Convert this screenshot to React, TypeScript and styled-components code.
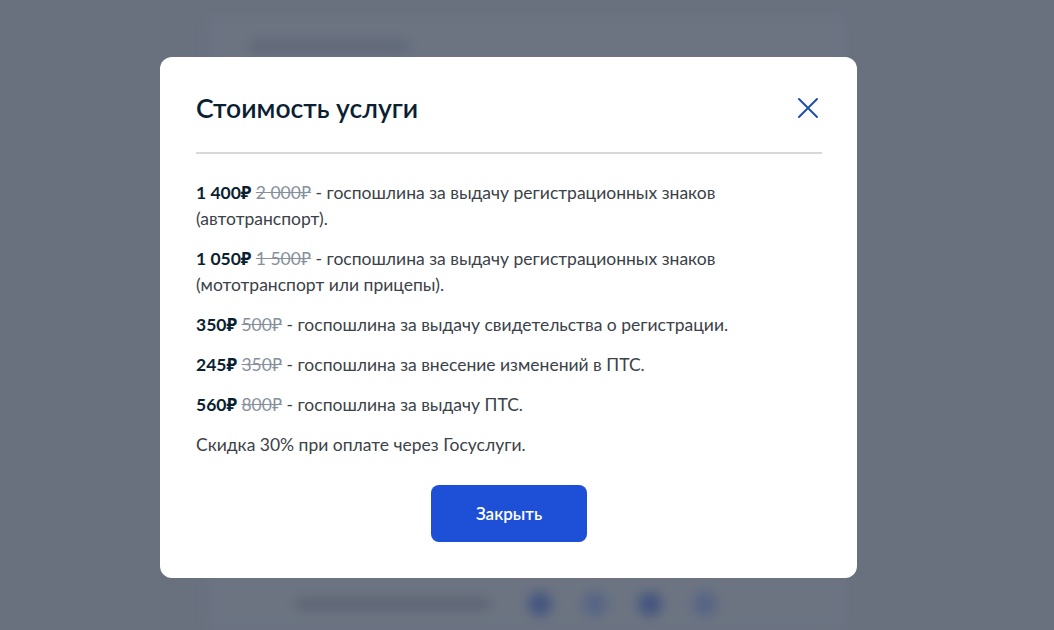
import React from "react";
import styled, { createGlobalStyle } from "styled-components";

const Global = createGlobalStyle`
  html, body { margin: 0; padding: 0; }
  body {
    width: 1054px;
    height: 630px;
    overflow: hidden;
    background: #69717f;
    font-family: Lato, "Noto Sans", "DejaVu Sans", sans-serif;
  }
`;

const BackPage = styled.div`
  width: 1054px;
  height: 630px;
  display: flex;
  flex-direction: column;
  align-items: center;
  filter: blur(6px);
`;

const BackPanel = styled.div`
  width: 636px;
  margin-top: 16px;
  height: 620px;
  background: #6c7482;
  display: flex;
  flex-direction: column;
  justify-content: space-between;
  padding: 24px 40px 14px;
  box-sizing: border-box;
`;

const BackTitle = styled.div`
  width: 160px;
  height: 12px;
  background: #5f6877;
  border-radius: 4px;
`;

const BackFooter = styled.div`
  display: flex;
  align-items: center;
  gap: 38px;
  padding-left: 46px;
`;

const BackText = styled.div`
  width: 195px;
  height: 12px;
  background: #5d6574;
  border-radius: 4px;
`;

const BackCircles = styled.div`
  display: flex;
  gap: 31px;
`;

const BackCircle = styled.div<{ $dark?: boolean }>`
  width: 24px;
  height: 24px;
  border-radius: 50%;
  background: ${(p) => (p.$dark ? "#44557f" : "#566485")};
`;

const Overlay = styled.div`
  position: fixed;
  inset: 0;
  display: flex;
  align-items: flex-start;
  padding: 57px 0 0 160px;
  box-sizing: border-box;
`;

const Modal = styled.div`
  width: 697px;
  height: 521px;
  box-sizing: border-box;
  background: #ffffff;
  border-radius: 12px;
  padding: 30px 35px 36px 36px;
  display: flex;
  flex-direction: column;
`;

const Header = styled.div`
  display: flex;
  align-items: center;
  justify-content: space-between;
  padding-bottom: 23px;
  border-bottom: 2px solid #d5d9de;
`;

const Title = styled.h2`
  margin: 0;
  font-size: 26.5px;
  line-height: 42px;
  font-weight: 600;
  color: #0b1f33;
`;

const CloseButton = styled.button`
  width: 32px;
  height: 32px;
  margin-right: -2px;
  border: 0;
  padding: 0;
  background: transparent;
  display: flex;
  align-items: center;
  justify-content: center;
  cursor: pointer;
`;

const Body = styled.div`
  padding-top: 26px;
  display: flex;
  flex-direction: column;
  gap: 14px;
`;

const Para = styled.p`
  margin: 0;
  font-size: 17.5px;
  line-height: 26px;
  color: #3b4248;
  width: 560px;
`;

const Price = styled.b`
  font-weight: 700;
  color: #0b1f33;
`;

const Old = styled.s`
  color: #86909c;
`;

const Footer = styled.div`
  margin-top: auto;
  display: flex;
  justify-content: center;
`;

const PrimaryButton = styled.button`
  width: 156px;
  height: 57px;
  border: 0;
  border-radius: 8px;
  background: #1d50d6;
  color: #ffffff;
  font-family: Lato, "Noto Sans", sans-serif;
  font-size: 17px;
  font-weight: 600;
  cursor: pointer;
`;

const items = [
  { price: "1 400₽", old: "2 000₽", text: "госпошлина за выдачу регистрационных знаков (автотранспорт)." },
  { price: "1 050₽", old: "1 500₽", text: "госпошлина за выдачу регистрационных знаков (мототранспорт или прицепы)." },
  { price: "350₽", old: "500₽", text: "госпошлина за выдачу свидетельства о регистрации." },
  { price: "245₽", old: "350₽", text: "госпошлина за внесение изменений в ПТС." },
  { price: "560₽", old: "800₽", text: "госпошлина за выдачу ПТС." },
];

export default function App() {
  return (
    <>
      <Global />
      <BackPage>
        <BackPanel>
          <BackTitle />
          <BackFooter>
            <BackText />
            <BackCircles>
              <BackCircle $dark />
              <BackCircle />
              <BackCircle $dark />
              <BackCircle />
            </BackCircles>
          </BackFooter>
        </BackPanel>
      </BackPage>
      <Overlay>
        <Modal>
          <Header>
            <Title>Стоимость услуги</Title>
            <CloseButton aria-label="Закрыть">
              <svg width="22" height="22" viewBox="0 0 22 22" fill="none">
                <path d="M2 2 L20 20 M20 2 L2 20" stroke="#1f4fa8" strokeWidth="2" strokeLinecap="round" />
              </svg>
            </CloseButton>
          </Header>
          <Body>
            {items.map((it) => (
              <Para key={it.price}>
                <Price>{it.price}</Price> <Old>{it.old}</Old> - {it.text}
              </Para>
            ))}
            <Para>Скидка 30% при оплате через Госуслуги.</Para>
          </Body>
          <Footer>
            <PrimaryButton>Закрыть</PrimaryButton>
          </Footer>
        </Modal>
      </Overlay>
    </>
  );
}
